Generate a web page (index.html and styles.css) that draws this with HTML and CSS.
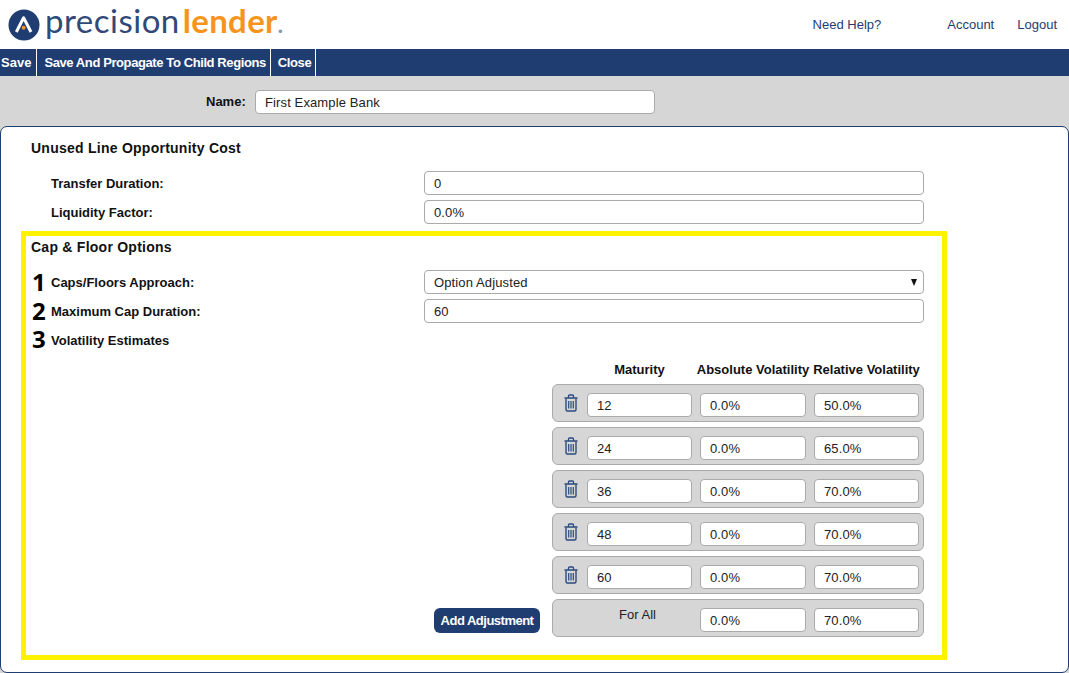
FILE: index.html
```html
<!DOCTYPE html>
<html lang="en">
<head>
<meta charset="utf-8">
<title>Precision Lender</title>
<link rel="stylesheet" href="styles.css">
</head>
<body>
<header class="topbar">
  <a class="logo" href="#">
    <svg class="logo-mark" width="32" height="32" viewBox="0 0 32 32" aria-hidden="true">
      <circle cx="16" cy="16" r="15.5" fill="#1f3d70"/>
      <path d="M8.3 23 L15.6 8.8 L23 23" fill="none" stroke="#fff" stroke-width="3" stroke-linejoin="round"/>
      <circle cx="15.6" cy="18.8" r="2" fill="#f7941e"/>
    </svg>
    <span class="logo-text"><span class="logo-a">precision</span><span class="logo-b">lender</span><span class="logo-c">.</span></span>
  </a>
  <nav class="links">
    <a class="link link-help" href="#">Need Help?</a>
    <a class="link link-account" href="#">Account</a>
    <a class="link" href="#">Logout</a>
  </nav>
</header>
<div class="toolbar">
  <button class="tool tool-first">Save</button>
  <button class="tool">Save And Propagate To Child Regions</button>
  <button class="tool">Close</button>
</div>
<div class="namebar">
  <label class="name-label">Name:</label>
  <input class="field name-field" value="First Example Bank">
</div>
<main class="panel">
  <section class="plain">
    <h2 class="heading">Unused Line Opportunity Cost</h2>
    <div class="row"><label class="label">Transfer Duration:</label><input class="field wide" value="0"></div>
    <div class="row"><label class="label">Liquidity Factor:</label><input class="field wide" value="0.0%"></div>
  </section>
  <section class="marked">
    <h2 class="heading">Cap &amp; Floor Options</h2>
    <div class="row"><span class="num">1</span><label class="label">Caps/Floors Approach:</label>
      <div class="select-wrap"><select class="field select"><option>Option Adjusted</option></select></div></div>
    <div class="row"><span class="num">2</span><label class="label">Maximum Cap Duration:</label><input class="field wide" value="60"></div>
    <div class="row"><span class="num num-up">3</span><label class="label">Volatility Estimates</label></div>
    <div class="vol">
      <div class="cols vol-head"><span class="cell">Maturity</span><span class="cell">Absolute Volatility</span><span class="cell">Relative Volatility</span></div>
      <div class="cols vol-row"><svg class="trash" viewBox="0 0 16 18" width="16" height="18" aria-hidden="true"><use href="#trash"/></svg><input class="field" value="12"><input class="field" value="0.0%"><input class="field" value="50.0%"></div>
      <div class="cols vol-row"><svg class="trash" viewBox="0 0 16 18" width="16" height="18" aria-hidden="true"><use href="#trash"/></svg><input class="field" value="24"><input class="field" value="0.0%"><input class="field" value="65.0%"></div>
      <div class="cols vol-row"><svg class="trash" viewBox="0 0 16 18" width="16" height="18" aria-hidden="true"><use href="#trash"/></svg><input class="field" value="36"><input class="field" value="0.0%"><input class="field" value="70.0%"></div>
      <div class="cols vol-row"><svg class="trash" viewBox="0 0 16 18" width="16" height="18" aria-hidden="true"><use href="#trash"/></svg><input class="field" value="48"><input class="field" value="0.0%"><input class="field" value="70.0%"></div>
      <div class="cols vol-row"><svg class="trash" viewBox="0 0 16 18" width="16" height="18" aria-hidden="true"><use href="#trash"/></svg><input class="field" value="60"><input class="field" value="0.0%"><input class="field" value="70.0%"></div>
      <div class="vol-foot">
        <button class="add">Add Adjustment</button>
        <div class="cols vol-row"><span class="forall">For All</span><input class="field" value="0.0%"><input class="field" value="70.0%"></div>
      </div>
    </div>
  </section>
</main>
<svg class="defs" width="0" height="0" aria-hidden="true">
  <symbol id="trash" viewBox="0 0 16 18">
    <path d="M1.5 4 H14.5 M5.5 3.5 V2 Q5.5 1 6.5 1 H9.5 Q10.5 1 10.5 2 V3.5" fill="none" stroke="#2b4a7d" stroke-width="1.3"/>
    <path d="M3 4.5 V15.5 Q3 17 4.4 17 H11.6 Q13 17 13 15.5 V4.5" fill="none" stroke="#2b4a7d" stroke-width="1.4"/>
    <path d="M5.7 7 V14.5 M8 7 V14.5 M10.3 7 V14.5" fill="none" stroke="#2b4a7d" stroke-width="1.2"/>
  </symbol>
</svg>
</body>
</html>
```

FILE: styles.css
```css
* { box-sizing: border-box; }
html, body { margin: 0; padding: 0; }
body {
  width: 1069px;
  height: 673px;
  overflow: hidden;
  background: #d6d6d6;
  font-family: "Liberation Sans", Arial, sans-serif;
  font-size: 13px;
  color: #111;
}
.defs { display: block; height: 0; }
.topbar {
  height: 49px;
  background: #fff;
  display: flex;
  justify-content: space-between;
  align-items: center;
}
.logo {
  display: flex;
  align-items: center;
  padding-left: 8px;
  text-decoration: none;
}
.logo-mark { margin-right: 5px; flex: none; }
.logo-text {
  font-family: Lato, sans-serif;
  font-size: 33px;
  line-height: 38px;
  padding-bottom: 4px;
  white-space: nowrap;
}
.logo-a { color: #2f4a78; font-weight: 400; letter-spacing: 0.5px; }
.logo-b { color: #f7941e; font-weight: 700; letter-spacing: 0.3px; margin-left: 3px; }
.logo-c { color: #8a93a3; font-weight: 700; font-size: 22px; }
.links { display: flex; padding-right: 12px; }
.link { color: #1f3d70; text-decoration: none; line-height: 16px; }
.link-help { margin-right: 66px; }
.link-account { margin-right: 23px; }
.toolbar { height: 27px; background: #1f3d70; display: flex; }
.tool {
  height: 27px;
  border: 0;
  border-right: 1px solid #fff;
  background: transparent;
  color: #fff;
  font: bold 13px "Liberation Sans", Arial, sans-serif;
  letter-spacing: -0.4px;
  padding: 0 4px 1px 7px;
}
.tool-first { padding: 0 5px 1px 1px; letter-spacing: 0; }
.namebar {
  height: 50px;
  display: flex;
  align-items: flex-start;
  padding: 14px 0 0 206px;
}
.name-label { font-weight: bold; line-height: 24px; width: 49px; }
.field {
  height: 24px;
  border: 1px solid #aaa;
  border-radius: 4px;
  background: #fff;
  color: #222;
  font: 13px "Liberation Sans", Arial, sans-serif;
  letter-spacing: 0.12px;
  padding: 0 9px;
  min-width: 0;
  width: 100%;
}
.name-field { width: 400px; }
.panel {
  height: 547px;
  background: #fff;
  border: 1px solid #1f3d70;
  border-radius: 7px;
  padding-top: 11px;
}
.plain { padding-left: 30px; height: 93px; }
.heading {
  margin: 0;
  font-size: 14px;
  line-height: 20px;
  font-weight: bold;
  color: #111;
  letter-spacing: 0.25px;
}
.row {
  display: flex;
  align-items: center;
  height: 24px;
  margin-top: 5px;
  padding-left: 20px;
}
.plain .heading + .row { margin-top: 13px; }
.label { width: 373px; font-weight: bold; flex: none; }
.wide, .select-wrap { width: 500px; flex: none; }
.marked {
  margin-left: 20px;
  width: 926px;
  height: 429px;
  border: 5px solid #fff200;
  padding-top: 1px;
}
.marked .heading { padding-left: 5px; }
.marked .heading + .row { margin-top: 13px; }
.marked .row { padding-left: 0; }
.num {
  width: 25px;
  flex: none;
  padding-left: 6px;
  font: 700 24px/24px "Open Sans", sans-serif;
  color: #000;
}
.num-up { margin-top: -3px; }
.select-wrap { position: relative; }
.select { appearance: none; -webkit-appearance: none; display: block; }
.select-wrap::after {
  content: "";
  position: absolute;
  right: 7px;
  top: 9px;
  border-left: 3.5px solid transparent;
  border-right: 3.5px solid transparent;
  border-top: 7px solid #111;
}
.vol {
  margin: 7px 0 0 408px;
  width: 490px;
  display: flex;
  flex-direction: column;
  align-items: flex-end;
  gap: 5px;
}
.cols {
  display: grid;
  grid-template-columns: 105px 106px 105px;
  column-gap: 8px;
  width: 372px;
  padding-left: 34px;
}
.vol-head { height: 20px; padding-left: 35px; }
.cell {
  display: flex;
  justify-content: center;
  align-items: center;
  font-weight: bold;
  white-space: nowrap;
}
.vol-row {
  position: relative;
  height: 38px;
  background: #d6d6d6;
  border: 1px solid #aaa;
  border-radius: 6px;
  padding-top: 8px;
}
.trash { position: absolute; left: 10px; top: 9px; }
.vol-foot { display: flex; align-items: flex-start; gap: 12px; }
.add {
  margin-top: 9px;
  width: 106px;
  height: 25px;
  border: 0;
  border-radius: 6px;
  background: #1f3d70;
  color: #fff;
  font: bold 13px "Liberation Sans", Arial, sans-serif;
  letter-spacing: -0.5px;
  white-space: nowrap;
  padding: 0;
}
.forall {
  text-align: center;
  line-height: 14px;
  padding-right: 4px;
  color: #222;
}
```
